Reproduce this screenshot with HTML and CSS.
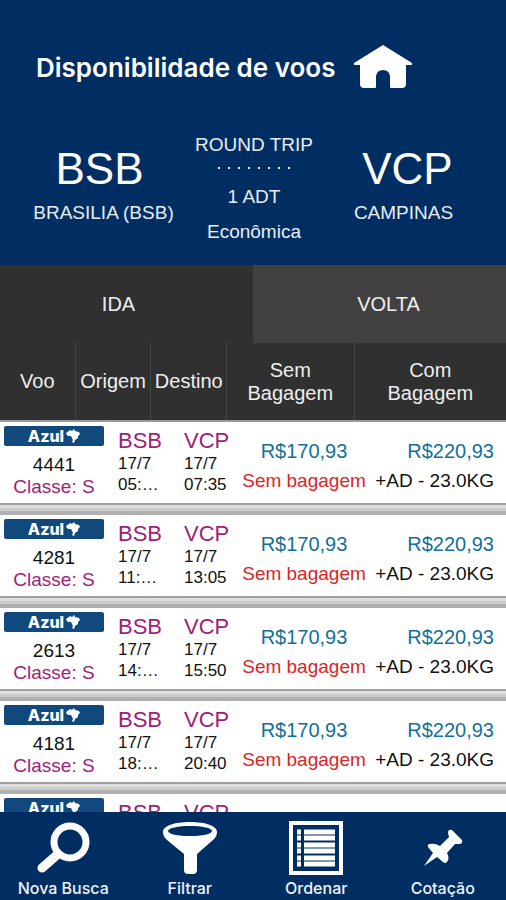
FILE: index.html
```html
<!DOCTYPE html>
<html lang="pt-BR">
<head>
<meta charset="utf-8">
<meta name="viewport" content="width=device-width, initial-scale=1">
<title>Disponibilidade de voos</title>
<link rel="stylesheet" href="styles.css">
</head>
<body>
<svg class="symbols" aria-hidden="true">
  <symbol id="brand-map" viewBox="0 0 14 14">
    <path d="M0 5 L1 3 L3 2 L4 1 L6 2 L8 0 L9 2 L13 3 L14 5 L12 7 L12 9 L9 11 L8 14 L6 13 L7 11 L6 9 L5 7 L2 7 Z"/>
  </symbol>
</svg>
<div class="app">
  <header class="title-bar">
    <h1 class="title">Disponibilidade de voos</h1>
    <a class="home" href="#" aria-label="Início">
      <svg viewBox="0 0 60 44" width="60" height="44"><path fill="#fff" d="M30 0 L59 18 Q60 20 57 20 H53 V39 Q53 43 49 43 H38 Q37 43 37 42 V31 Q36 25 30 25 Q24 25 23 31 V42 Q23 43 22 43 H11 Q7 43 7 39 V20 H3 Q0 20 1 18 Z"/></svg>
    </a>
  </header>

  <section class="route">
    <div class="place place-from">
      <span class="code">BSB</span>
      <span>BRASILIA (BSB)</span>
    </div>
    <div class="trip">
      <span>ROUND TRIP</span>
      <span class="dots"></span>
      <span>1 ADT</span>
      <span class="cabin">Econômica</span>
    </div>
    <div class="place place-to">
      <span class="code">VCP</span>
      <span>CAMPINAS</span>
    </div>
  </section>

  <div class="tabs">
    <button class="tab tab-out" type="button">IDA</button>
    <button class="tab tab-back" type="button">VOLTA</button>
  </div>

  <main class="results">
    <table class="flights">
      <thead>
        <tr><th>Voo</th><th>Origem</th><th>Destino</th><th>Sem Bagagem</th><th>Com Bagagem</th></tr>
      </thead>
      <tbody>
        <tr>
          <td class="flight"><span class="airline">Azul<svg class="map"><use href="#brand-map"/></svg></span><span>4441</span><span class="class">Classe: S</span></td>
          <td class="stop"><span class="airport">BSB</span><span>17/7</span><span>05:…</span></td>
          <td class="stop"><span class="airport">VCP</span><span>17/7</span><span>07:35</span></td>
          <td class="fare"><span class="price">R$170,93</span><span class="no-bag">Sem bagagem</span></td>
          <td class="fare fare-bag"><span class="price">R$220,93</span><span>+AD - 23.0KG</span></td>
        </tr>
        <tr>
          <td class="flight"><span class="airline">Azul<svg class="map"><use href="#brand-map"/></svg></span><span>4281</span><span class="class">Classe: S</span></td>
          <td class="stop"><span class="airport">BSB</span><span>17/7</span><span>11:…</span></td>
          <td class="stop"><span class="airport">VCP</span><span>17/7</span><span>13:05</span></td>
          <td class="fare"><span class="price">R$170,93</span><span class="no-bag">Sem bagagem</span></td>
          <td class="fare fare-bag"><span class="price">R$220,93</span><span>+AD - 23.0KG</span></td>
        </tr>
        <tr>
          <td class="flight"><span class="airline">Azul<svg class="map"><use href="#brand-map"/></svg></span><span>2613</span><span class="class">Classe: S</span></td>
          <td class="stop"><span class="airport">BSB</span><span>17/7</span><span>14:…</span></td>
          <td class="stop"><span class="airport">VCP</span><span>17/7</span><span>15:50</span></td>
          <td class="fare"><span class="price">R$170,93</span><span class="no-bag">Sem bagagem</span></td>
          <td class="fare fare-bag"><span class="price">R$220,93</span><span>+AD - 23.0KG</span></td>
        </tr>
        <tr>
          <td class="flight"><span class="airline">Azul<svg class="map"><use href="#brand-map"/></svg></span><span>4181</span><span class="class">Classe: S</span></td>
          <td class="stop"><span class="airport">BSB</span><span>17/7</span><span>18:…</span></td>
          <td class="stop"><span class="airport">VCP</span><span>17/7</span><span>20:40</span></td>
          <td class="fare"><span class="price">R$170,93</span><span class="no-bag">Sem bagagem</span></td>
          <td class="fare fare-bag"><span class="price">R$220,93</span><span>+AD - 23.0KG</span></td>
        </tr>
        <tr>
          <td class="flight"><span class="airline">Azul<svg class="map"><use href="#brand-map"/></svg></span></td>
          <td class="stop"><span class="airport">BSB</span></td>
          <td class="stop"><span class="airport">VCP</span></td>
          <td class="fare"></td>
          <td class="fare fare-bag"></td>
        </tr>
      </tbody>
    </table>
  </main>

  <nav class="toolbar">
    <button class="tool" type="button">
      <svg viewBox="0 0 56 56" width="56" height="56"><circle cx="35" cy="22" r="16" fill="none" stroke="#fff" stroke-width="7"/><path d="M23 34 L7 48" stroke="#fff" stroke-width="9" stroke-linecap="round"/></svg>
      Nova Busca
    </button>
    <button class="tool" type="button">
      <svg viewBox="0 0 56 56" width="56" height="56"><path fill="#fff" fill-rule="evenodd" d="M28 2 C44 2 55 6 55 12 C55 16 53 18 51 20 L35 34 V50 Q35 54 31 54 H26 Q22 54 22 50 V34 L5 20 C3 18 1 16 1 12 C1 6 12 2 28 2 Z M28 6 C16 6 6 8 6 11 C6 14 16 16 28 16 C40 16 50 14 50 11 C50 8 40 6 28 6 Z"/></svg>
      Filtrar
    </button>
    <button class="tool" type="button">
      <svg viewBox="0 0 56 56" width="56" height="56"><path fill="none" stroke="#fff" stroke-width="4" d="M3 3 H53 V53 H3 Z"/><path stroke="#fff" stroke-width="5" d="M9 12 H13 M16 12 H47 M9 18 H13 M16 18 H47 M9 25 H13 M16 25 H47 M9 31 H13 M16 31 H47 M9 38 H13 M16 38 H47 M9 44 H13 M16 44 H47"/></svg>
      Ordenar
    </button>
    <button class="tool" type="button">
      <svg viewBox="0 0 56 56" width="56" height="56"><path fill="#fff" d="M33 13 Q33 9 37 10 L47 20 Q48 24 44 24 L40 24 L32 33 Q35 38 32 42 Q30 44 28 42 L22 37 L9 46 L18 33 L13 27 Q12 24 15 24 Q20 23 25 26 L34 17 Z"/></svg>
      Cotação
    </button>
  </nav>
</div>
</body>
</html>
```
FILE: styles.css
```css
* {
  box-sizing: border-box;
}

body {
  margin: 0;
  font-family: "Liberation Sans", Arial, sans-serif;
  font-size: 19px;
  line-height: 22px;
  color: #111;
  background: #012e62;
}

button {
  margin: 0;
  padding: 0;
  border: 0;
  background: none;
  color: inherit;
  font: inherit;
}

.symbols {
  display: none;
}

.app {
  display: flex;
  flex-direction: column;
  height: 100vh;
}

/* Header */
.title-bar {
  display: flex;
  align-items: center;
  gap: 18px;
  padding: 45px 36px 0;
  color: #fff;
}

.title {
  margin: 0;
  padding-top: 2px;
  font-family: Inter, sans-serif;
  font-size: 26px;
  font-weight: 600;
  line-height: 32px;
}

.home svg {
  display: block;
}

.route {
  display: grid;
  grid-template-columns: 207px 94px 1fr;
  padding: 45px 0 22px;
  color: #e8edf6;
  text-align: center;
}

.place,
.trip {
  display: flex;
  flex-direction: column;
  align-items: center;
  white-space: nowrap;
}

.place {
  gap: 10px;
  padding-top: 12px;
}

.code {
  color: #fff;
  font-size: 44px;
  line-height: 46px;
}

.place-from .code {
  padding-right: 8px;
}

.place-to .code {
  padding-left: 8px;
}

.dots {
  width: 72px;
  height: 2px;
  margin: 11px 0 17px;
  background: repeating-linear-gradient(90deg, #e8edf6 0 2px, transparent 2px 10px);
}

.cabin {
  margin-top: 13px;
}

/* Direction tabs */
.tabs {
  display: grid;
  grid-template-columns: 1fr 1fr;
  color: #eee;
  font-size: 20px;
}

.tab {
  height: 78px;
}

.tab-out {
  padding-right: 16px;
  background: #303030;
}

.tab-back {
  padding-left: 18px;
  background: #414141;
}

/* Flight list */
.results {
  flex: 1;
  min-height: 0;
  overflow: hidden;
  background: #fff;
}

.flights,
.flights thead,
.flights tbody {
  display: block;
}

.flights tr {
  display: grid;
}

.flights thead tr {
  grid-template-columns: 76fr 76fr 76fr 128fr 152fr;
  height: 79px;
  background: #303030;
  border-bottom: 2px solid #999;
}

.flights th {
  display: flex;
  align-items: center;
  justify-content: center;
  padding: 0;
  border-right: 1px solid #444;
  color: #eee;
  font-size: 20px;
  font-weight: 400;
  line-height: 23px;
}

.flights th:nth-child(n + 4) {
  padding: 0 16px;
}

.flights th:last-child {
  border-right: 0;
}

.flights tbody tr {
  grid-template-columns: 108px 66px 58px 1fr 118px;
  height: 93px;
  padding: 4px 12px 0 0;
  background: linear-gradient(#fff 81px, #a0a0a0 81px 83px, #dedede 83px 86px, #cbcbcb 86px 89px, #b0b0b0 89px 93px);
}

.flights td {
  display: flex;
  flex-direction: column;
  padding: 0;
  white-space: nowrap;
}

.flight {
  align-items: center;
}

.airline {
  display: flex;
  align-items: center;
  align-self: stretch;
  justify-content: center;
  gap: 2px;
  height: 20px;
  margin: 0 4px 8px;
  border-radius: 2px;
  background: #12497c;
  color: #fff;
  font-family: Inter, sans-serif;
  font-size: 16px;
  font-weight: 800;
}

.map {
  width: 14px;
  height: 14px;
  fill: #fff;
}

.class,
.airport {
  color: #a01d78;
}

.flights .stop {
  padding-left: 10px;
  font-size: 17px;
  line-height: 21px;
}

.airport {
  margin: 4px 0 2px;
  font-size: 22px;
}

.flights .fare {
  align-items: center;
  gap: 8px;
  padding-top: 14px;
}

.flights .fare-bag {
  align-items: flex-end;
}

.price {
  color: #12709b;
  font-size: 20px;
}

.no-bag {
  color: #dc2528;
}

/* Bottom toolbar */
.toolbar {
  display: grid;
  grid-template-columns: repeat(4, 1fr);
  height: 88px;
  background: #012e62;
}

.tool {
  display: flex;
  flex-direction: column;
  align-items: center;
  gap: 2px;
  padding-top: 8px;
  color: #f0f3f8;
  font-family: Inter, sans-serif;
  font-size: 16px;
  font-weight: 500;
  line-height: 20px;
}

.tool svg {
  overflow: visible;
}
```
